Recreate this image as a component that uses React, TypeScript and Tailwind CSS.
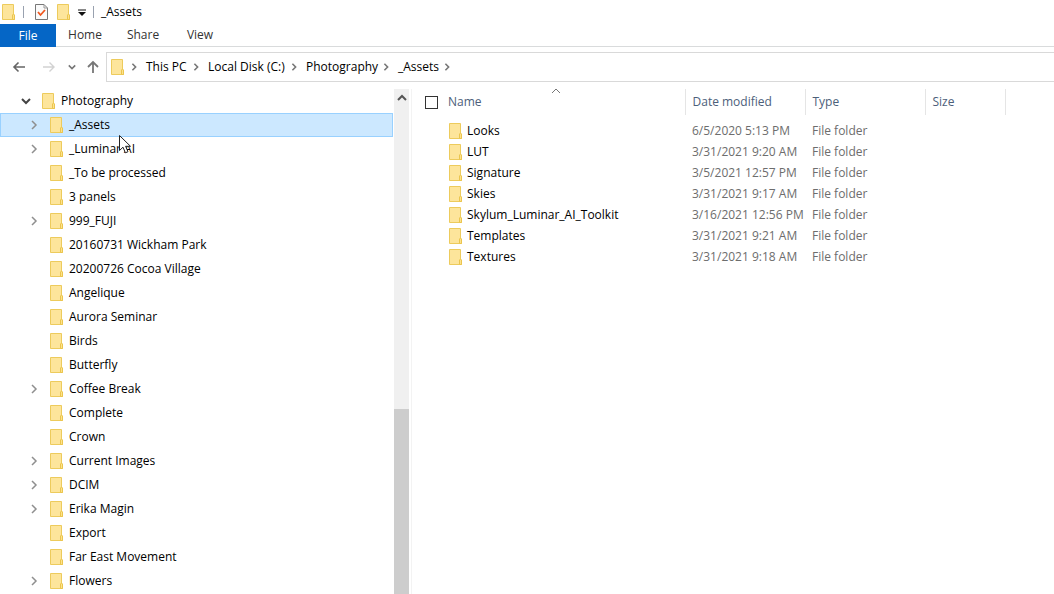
import { ReactNode } from 'react';

type TreeItem = {
  name: string;
  expandable?: boolean;
  selected?: boolean;
};

const TREE: TreeItem[] = [
  { name: '_Assets', expandable: true, selected: true },
  { name: '_Luminar AI', expandable: true },
  { name: '_To be processed' },
  { name: '3 panels' },
  { name: '999_FUJI', expandable: true },
  { name: '20160731 Wickham Park' },
  { name: '20200726 Cocoa Village' },
  { name: 'Angelique' },
  { name: 'Aurora Seminar' },
  { name: 'Birds' },
  { name: 'Butterfly' },
  { name: 'Coffee Break', expandable: true },
  { name: 'Complete' },
  { name: 'Crown' },
  { name: 'Current Images', expandable: true },
  { name: 'DCIM', expandable: true },
  { name: 'Erika Magin', expandable: true },
  { name: 'Export' },
  { name: 'Far East Movement' },
  { name: 'Flowers', expandable: true },
];

const FILES = [
  { name: 'Looks', date: '6/5/2020 5:13 PM' },
  { name: 'LUT', date: '3/31/2021 9:20 AM' },
  { name: 'Signature', date: '3/5/2021 12:57 PM' },
  { name: 'Skies', date: '3/31/2021 9:17 AM' },
  { name: 'Skylum_Luminar_AI_Toolkit', date: '3/16/2021 12:56 PM' },
  { name: 'Templates', date: '3/31/2021 9:21 AM' },
  { name: 'Textures', date: '3/31/2021 9:18 AM' },
];

// width includes the gap to the next crumb
const CRUMBS = [
  { name: 'This PC', width: 'w-[62px]' },
  { name: 'Local Disk (C:)', width: 'w-[98px]' },
  { name: 'Photography', width: 'w-[92px]' },
  { name: '_Assets', width: 'w-[61px]' },
];

function FolderIcon() {
  return (
    <svg className="shrink-0" width="14" height="16" viewBox="0 0 14 16" aria-hidden="true">
      <path d="M.5.5h11v10l1 1v4H.5z" fill="#fde59b" stroke="#edcb5c" />
      <path d="M10.5 15.5v-4.500l1-1 1 1v4.500z" fill="#fde28c" stroke="#ebc54e" />
    </svg>
  );
}

function Chevron({ className, d, size = 10 }: { className: string; d: string; size?: number }) {
  return (
    <svg
      className={`shrink-0 ${className}`}
      width={size}
      height={size}
      viewBox="0 0 10 10"
      fill="none"
      stroke="currentColor"
      aria-hidden="true"
    >
      <path d={d} />
    </svg>
  );
}

const RIGHT = 'M3 1l4 4-4 4';
const DOWN = 'M1 3l4 4 4-4';
const UP = 'M1 7l4-4 4 4';

function TitleBar() {
  return (
    <header className="flex h-6 items-center pl-[2px]">
      <FolderIcon />
      <span className="ml-[7px] h-3 w-px bg-gray-400" />
      <button className="ml-[11px]" aria-label="Properties">
        <svg width="13" height="16" viewBox="0 0 13 16" fill="none">
          <path d="M.5.5h8.500l3.500 3.500v11.500H.5z" fill="#fafafa" stroke="#777" />
          <path d="M9 .5V4h3.500" stroke="#999" />
          <path d="M3 8l2.500 3L10 6" stroke="#f0561d" strokeWidth="1.8" />
        </svg>
      </button>
      <button className="ml-[9px]" aria-label="New folder">
        <FolderIcon />
      </button>
      <button className="ml-[7px]" aria-label="Customize Quick Access Toolbar">
        <svg width="8" height="8" viewBox="0 0 8 8">
          <path d="M0 2h8" stroke="#111" />
          <path d="M0 4h8L4 8z" fill="#111" />
        </svg>
      </button>
      <span className="ml-[7px] h-3 w-px bg-gray-400" />
      <h1 className="ml-[7px]">_Assets</h1>
    </header>
  );
}

function Ribbon() {
  return (
    <nav className="flex h-[23px] border-b border-[#d9dbdc]">
      <button className="-mb-px w-14 bg-[#0566c6] text-white">File</button>
      <button className="w-[58px] text-[#333]">Home</button>
      <button className="w-[58px] text-[#333]">Share</button>
      <button className="w-14 text-[#333]">View</button>
    </nav>
  );
}

function NavButton({ label, className, children }: { label: string; className: string; children: ReactNode }) {
  return (
    <button aria-label={label} className={className}>
      {children}
    </button>
  );
}

function AddressBar() {
  return (
    <div className="flex items-center pt-[5px] pb-[7px]">
      <div className="flex w-[106px] items-center pl-3">
        <NavButton label="Back" className="text-[#666]">
          <svg width="14" height="12" viewBox="0 0 14 12" fill="none" stroke="currentColor" strokeWidth="1.6">
            <path d="M13 6H2M6.500 1.500L2 6l4.500 4.500" />
          </svg>
        </NavButton>
        <NavButton label="Forward" className="ml-4 text-[#d2d2d2]">
          <svg width="14" height="12" viewBox="0 0 14 12" fill="none" stroke="currentColor" strokeWidth="1.4">
            <path d="M1 6h11M7.500 1.500L12 6l-4.500 4.500" />
          </svg>
        </NavButton>
        <NavButton label="Recent locations" className="ml-3 text-[#777]">
          <Chevron className="stroke-2" d={DOWN} size={8} />
        </NavButton>
        <NavButton label="Up" className="ml-[11px] text-[#777]">
          <svg width="12" height="14" viewBox="0 0 12 14" fill="none" stroke="currentColor" strokeWidth="1.8">
            <path d="M6 13V2M1 7l5-5 5 5" />
          </svg>
        </NavButton>
      </div>
      <nav className="flex h-[30px] flex-1 items-center border border-r-0 border-[#d9d9d9] pl-1" aria-label="Address">
        <FolderIcon />
        <Chevron className="mx-[5px] stroke-2 text-[#777]" d={RIGHT} size={8} />
        <ol className="ml-[3px] flex">
          {CRUMBS.map((crumb) => (
            <li key={crumb.name} className={`flex items-center justify-between pr-2 ${crumb.width}`}>
              <a href="#" className="whitespace-nowrap">{crumb.name}</a>
              <Chevron className="stroke-2 text-[#777]" d={RIGHT} size={8} />
            </li>
          ))}
        </ol>
      </nav>
    </div>
  );
}

function MouseCursor() {
  return (
    <svg className="absolute left-[117px] top-[20px] z-10" width="14" height="21" viewBox="0 0 14 21" aria-hidden="true">
      <path
        d="M1.500 1.500v15l3.500-3.300 2.400 5.600 2.600-1.100-2.400-5.400h4.900z"
        fill="#fff"
        stroke="#222"
      />
    </svg>
  );
}

function FolderTree() {
  return (
    <div className="w-[394px] shrink-0">
      <div className="flex h-6 items-center pl-[21px]">
        <button aria-label="Collapse Photography">
          <Chevron className="stroke-2 text-[#444]" d={DOWN} />
        </button>
        <a href="#" className="ml-[11px] flex items-center gap-[5px]">
          <FolderIcon />
          Photography
        </a>
      </div>
      <ul>
        {TREE.map((item) => (
          <li
            key={item.name}
            className={`relative mr-px flex h-6 items-center border pl-7 ${
              item.selected ? 'border-[#99d1ff] bg-[#cce8ff]' : 'border-transparent'
            }`}
          >
            <span className="flex w-[21px]">
              {item.expandable && (
                <button aria-label={`Expand ${item.name}`}>
                  <Chevron className="stroke-[1.5] text-[#8f8f8f]" d={RIGHT} />
                </button>
              )}
            </span>
            <a href="#" className="flex items-center gap-[5px]">
              <FolderIcon />
              {item.name}
            </a>
            {item.selected && <MouseCursor />}
          </li>
        ))}
      </ul>
    </div>
  );
}

function ScrollBar() {
  return (
    <div className="flex w-[15px] shrink-0 flex-col bg-[#f0f0f0]">
      <button className="flex h-80 justify-center pt-1" aria-label="Scroll up">
        <Chevron className="stroke-2 text-[#555]" d={UP} />
      </button>
      <div className="flex-1 bg-[#cdcdcd]" />
    </div>
  );
}

function FileList() {
  return (
    <main className="min-w-0 flex-1">
      <table className="w-full table-fixed text-left text-[#6d6d6d]">
        <thead>
          <tr className="h-[26px] text-[#4c607a]">
            <th className="relative w-[273px] border-r border-[#e5e5e5] pl-[13px] font-normal">
              <label className="flex items-center gap-[10px]">
                <input type="checkbox" className="size-[13px] appearance-none border border-[#333] bg-white" />
                Name
              </label>
              <Chevron className="absolute top-0 left-[139px] text-[#777]" d="M1 4l4-4 4 4" />
            </th>
            <th className="w-[120px] border-r border-[#e5e5e5] pl-[7px] font-normal">Date modified</th>
            <th className="w-[120px] border-r border-[#e5e5e5] pl-[7px] font-normal">Type</th>
            <th className="w-20 border-r border-[#e5e5e5] pl-[7px] font-normal">Size</th>
            <th aria-hidden="true" />
          </tr>
        </thead>
        <tbody>
          <tr className="h-[5px]" aria-hidden="true" />
          {FILES.map((file) => (
            <tr key={file.name} className="h-[21px]">
              <td className="pl-[37px] text-black">
                <a href="#" className="flex items-center gap-1">
                  <FolderIcon />
                  {file.name}
                </a>
              </td>
              <td className="whitespace-nowrap pl-[7px]">{file.date}</td>
              <td className="pl-[7px]">File folder</td>
              <td />
              <td />
            </tr>
          ))}
        </tbody>
      </table>
    </main>
  );
}

export default function App() {
  return (
    <div className="flex min-h-screen flex-col bg-white font-['Open_Sans','Noto_Sans',sans-serif] text-[12px] leading-4 text-black">
      <TitleBar />
      <Ribbon />
      <AddressBar />
      <div className="flex flex-1">
        <FolderTree />
        <ScrollBar />
        <div className="ml-[2px] w-px bg-[#f3f3f3]" />
        <FileList />
      </div>
    </div>
  );
}
